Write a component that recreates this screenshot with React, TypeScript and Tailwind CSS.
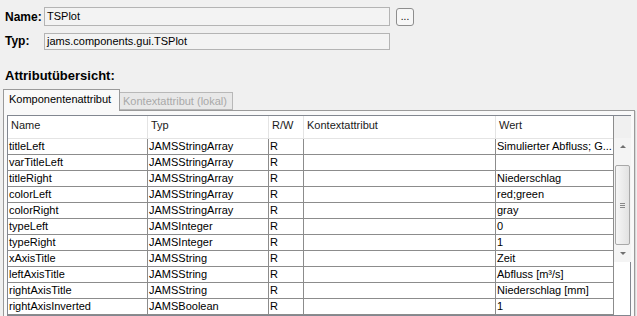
const rows: [string, string, string, string, string][] = [
  ["titleLeft", "JAMSStringArray", "R", "", "Simulierter Abfluss; G..."],
  ["varTitleLeft", "JAMSStringArray", "R", "", ""],
  ["titleRight", "JAMSStringArray", "R", "", "Niederschlag"],
  ["colorLeft", "JAMSStringArray", "R", "", "red;green"],
  ["colorRight", "JAMSStringArray", "R", "", "gray"],
  ["typeLeft", "JAMSInteger", "R", "", "0"],
  ["typeRight", "JAMSInteger", "R", "", "1"],
  ["xAxisTitle", "JAMSString", "R", "", "Zeit"],
  ["leftAxisTitle", "JAMSString", "R", "", "Abfluss [m³/s]"],
  ["rightAxisTitle", "JAMSString", "R", "", "Niederschlag [mm]"],
  ["rightAxisInverted", "JAMSBoolean", "R", "", "1"],
]

const widths = ["w-[140px]", "w-[121px]", "w-[35px]", "w-[192px]", "w-[117px]"]
const headers = ["Name", "Typ", "R/W", "Kontextattribut", "Wert"]

function Scrollbar() {
  return (
    <div className="flex flex-col w-[17px] bg-[#f4f4f4]">
      <div className="h-[22px] bg-[#f0f0f0]" />
      <div className="h-[17px] flex items-center justify-center">
        <div className="w-0 h-0 border-l-[3px] border-r-[3px] border-b-[3px] border-l-transparent border-r-transparent border-b-[#707070]" />
      </div>
      <div className="h-[10px]" />
      <div className="h-[80px] mx-[1px] rounded-[2px] border border-[#a8a8a8] bg-gradient-to-r from-[#f6f6f6] to-[#e2e2e2] flex items-center justify-center">
        <div className="flex flex-col gap-[1px]">
          <div className="w-[5px] h-[1px] bg-[#888]" />
          <div className="w-[5px] h-[1px] bg-[#888]" />
          <div className="w-[5px] h-[1px] bg-[#888]" />
        </div>
      </div>
      <div className="flex-1" />
      <div className="h-[17px] flex items-center justify-center">
        <div className="w-0 h-0 border-l-[3px] border-r-[3px] border-t-[3px] border-l-transparent border-r-transparent border-t-[#707070]" />
      </div>
    </div>
  )
}

export default function App() {
  return (
    <div className="w-[637px] h-[316px] overflow-hidden bg-[#f0f0f0] text-[11px] text-black font-['Tahoma','Liberation_Sans',sans-serif]">
      <div className="pl-[5px] pt-[7px]">
        <div className="flex items-center">
          <span className="w-[39px] font-bold text-[12px]">Name:</span>
          <div className="w-[346px] h-[19px] border border-[#b4b4b4] bg-[#f3f3f3] px-[2px] leading-[17px]">TSPlot</div>
          <button className="ml-[6px] w-[18px] h-[18px] border border-[#8e8e8e] rounded-[3px] bg-[#f7f7f7] text-[10px] leading-[12px]">...</button>
        </div>
        <div className="flex items-center mt-[6px]">
          <span className="w-[39px] font-bold text-[12px]">Typ:</span>
          <div className="w-[346px] h-[17px] border border-[#b4b4b4] bg-[#f3f3f3] px-[2px] leading-[15px]">jams.components.gui.TSPlot</div>
        </div>
        <div className="mt-[18px] font-bold text-[13px] leading-[16px]">Attributübersicht:</div>
      </div>

      <div className="ml-[3px] mt-[5px] w-[632px]">
        <div className="flex items-end h-[21px]">
          <div className="w-[117px] h-[22px] border border-b-0 border-[#9a9a9a] bg-[#f9f9f9] px-[5px] leading-[19px] relative z-10 -mb-[1px]">Komponentenattribut</div>
          <div className="w-[113px] h-[18px] border border-l-0 border-[#b8b8b8] bg-[#e8e8e8] px-[3px] leading-[16px] text-[#a8a8a8]">Kontextattribut (lokal)</div>
        </div>
        <div className="h-[209px] border border-[#9a9a9a] bg-[#f9f9f9] shadow-[1px_1px_0_#d8d8d8] px-[3px] pt-[4px]">
          <div className="flex border border-[#828790] bg-white h-[201px]">
            <div className="flex flex-col w-[605px]">
              <div className="flex h-[23px] border-b border-[#e4e4e4]">
                {headers.map((h, i) => (
                  <div key={h} className={`${widths[i]} px-[3px] leading-[19px] text-[#1a1a1a] border-r border-[#e4e4e4] ${i === 4 ? "border-r-0" : ""}`}>{h}</div>
                ))}
              </div>
              {rows.map((r) => (
                <div key={r[0]} className="flex h-[16px] border-b border-[#8c8c8c] shrink-0">
                  {r.map((c, i) => (
                    <div key={i} className={`${widths[i]} px-[1px] leading-[14px] truncate border-r border-[#8c8c8c] ${i === 4 ? "border-r-0" : ""}`}>{c}</div>
                  ))}
                </div>
              ))}
            </div>
            <div className="border-l border-[#8c8c8c]">
              <Scrollbar />
            </div>
          </div>
        </div>
      </div>
    </div>
  )
}
